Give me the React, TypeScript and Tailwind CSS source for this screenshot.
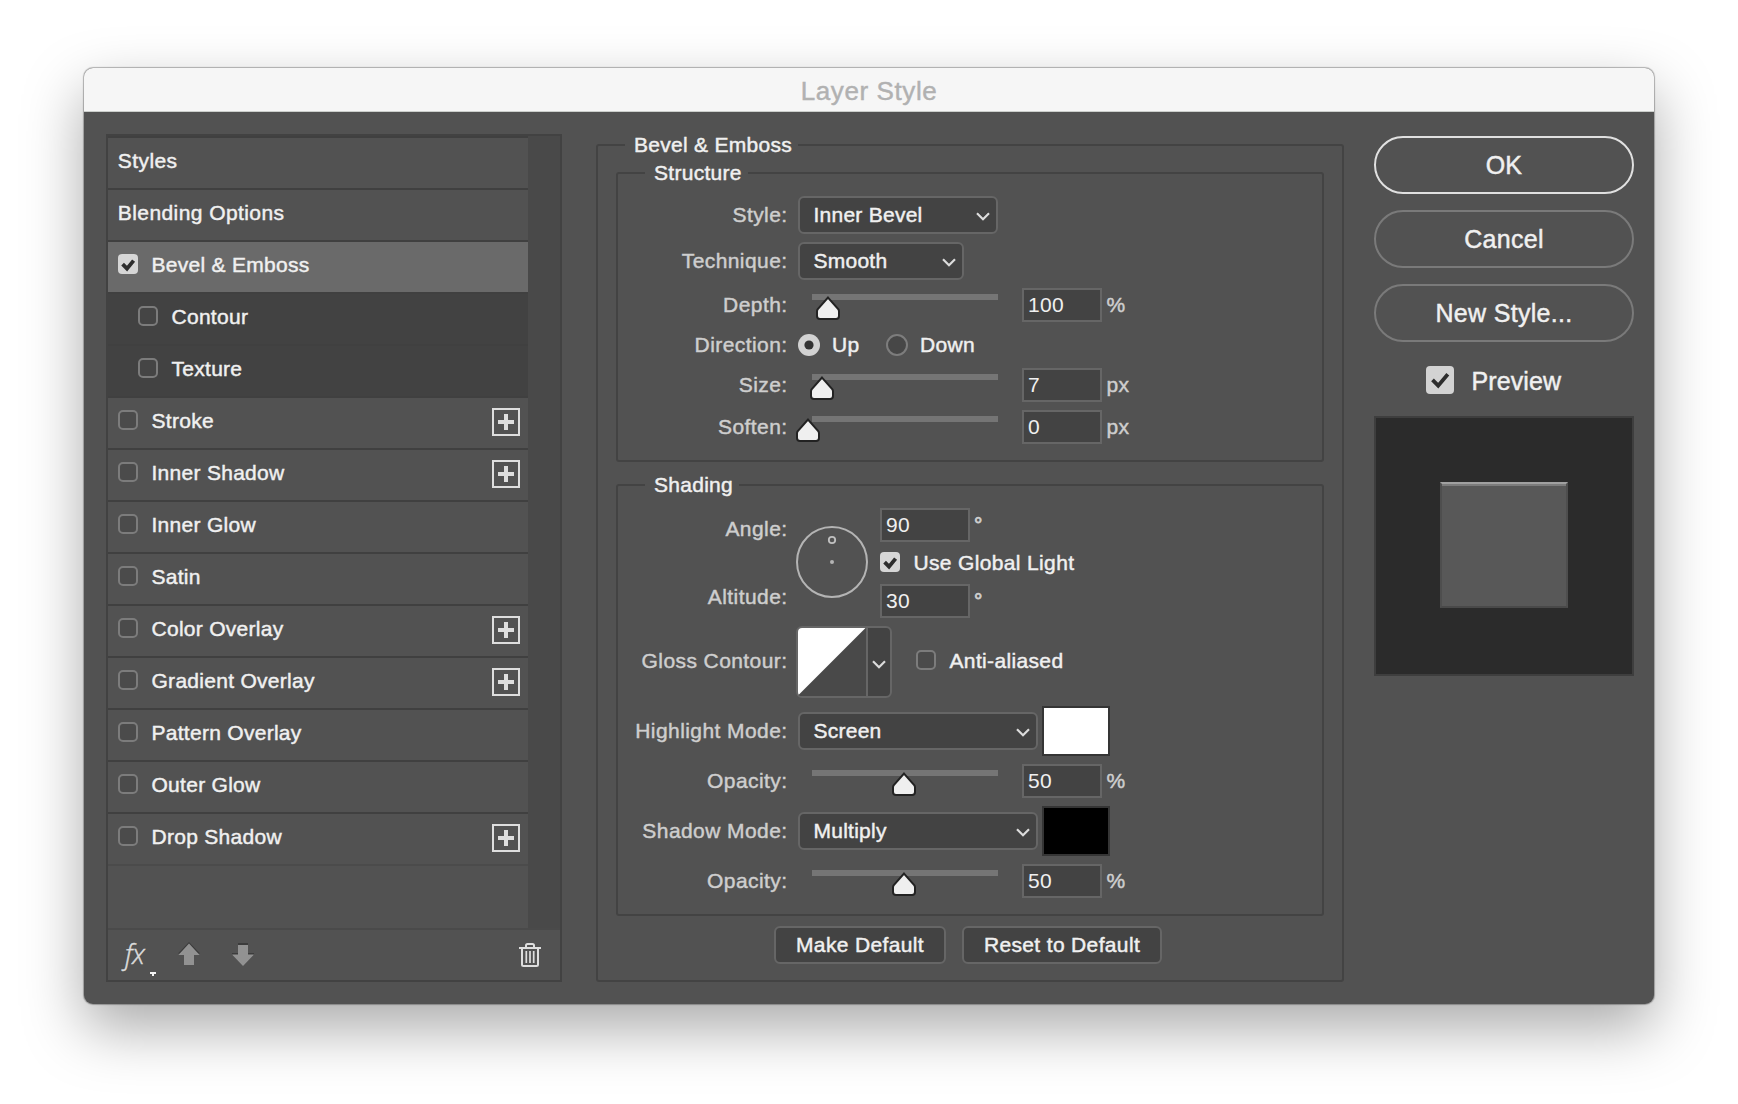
import React from "react";

type StyleItem = {
  name: string;
  check?: boolean;
  checked?: boolean;
  sub?: boolean;
  plus?: boolean;
};

const items: StyleItem[] = [
  { name: "Styles" },
  { name: "Blending Options" },
  { name: "Bevel & Emboss", check: true, checked: true },
  { name: "Contour", check: true, sub: true },
  { name: "Texture", check: true, sub: true },
  { name: "Stroke", check: true, plus: true },
  { name: "Inner Shadow", check: true, plus: true },
  { name: "Inner Glow", check: true },
  { name: "Satin", check: true },
  { name: "Color Overlay", check: true, plus: true },
  { name: "Gradient Overlay", check: true, plus: true },
  { name: "Pattern Overlay", check: true },
  { name: "Outer Glow", check: true },
  { name: "Drop Shadow", check: true, plus: true },
];

function Checkbox({ checked }: { checked?: boolean }) {
  if (!checked) {
    return <span className="block size-5 shrink-0 rounded-[5px] border-2 border-[#7c7c7c] bg-[#484848]/60" />;
  }
  return (
    <svg className="block size-5 shrink-0 rounded-[4px] bg-[#d6d6d6]" viewBox="0 0 20 20" fill="none">
      <path d="M4.6 10.2 9 14.7 15.6 6.6" stroke="#2e2e2e" strokeWidth="3.8" />
    </svg>
  );
}

function PlusBox() {
  return (
    <svg className="-mt-[2px] mr-2 ml-auto block size-7 shrink-0" viewBox="0 0 28 28">
      <rect x="1" y="1" width="26" height="26" fill="none" stroke="#dedede" strokeWidth="2" />
      <path d="M12 6h4v6h6v4h-6v6h-4v-6H6v-4h6z" fill="#dedede" />
    </svg>
  );
}

function Chevron() {
  return (
    <svg className="block h-[9px] w-[14px] shrink-0" viewBox="0 0 14 9" fill="none">
      <path d="M1 1.2 7 7.2 13 1.2" stroke="#dcdcdc" strokeWidth="2.2" />
    </svg>
  );
}

function Row({ label, className, children }: { label: string; className: string; children: React.ReactNode }) {
  return (
    <div className={`flex items-center ${className}`}>
      <span className="w-[170px] shrink-0 pr-[0.5px] text-right tracking-[0.42px] whitespace-nowrap text-[#cecece]">
        {label}
      </span>
      {children}
    </div>
  );
}

function Select({ value, width }: { value: string; width: string }) {
  return (
    <button
      className={`ml-[10px] flex h-[38px] items-center justify-between rounded-[6px] border-2 border-[#666] bg-[#434343] pr-[6px] pl-[13.5px] tracking-[0.25px] ${width}`}
    >
      <span>{value}</span>
      <span className="mt-[2px]">
        <Chevron />
      </span>
    </button>
  );
}

function Field({ value, width }: { value: string; width: string }) {
  return (
    <span
      className={`flex h-[34px] items-center border-2 border-[#666] bg-[#434343] pl-[4px] [-webkit-text-stroke:0px] ${width}`}
    >
      {value}
    </span>
  );
}

function Degree() {
  return <span className="ml-1 pt-[2px] leading-[30px] text-[#cecece] [-webkit-text-stroke:0.8px]">°</span>;
}

function Slider({ pos, value, unit }: { pos: number; value: string; unit: string }) {
  return (
    <>
      <span className="relative ml-6 block h-[34px] w-[186px] pt-[6px]">
        <span className="block h-[6px] bg-[#757575]" />
        <svg className="absolute top-2 size-6" style={{ left: pos - 12 }} viewBox="0 0 24 24">
          <path
            d="M12 1.6 22.2 13.2Q23 14.2 23 15.4V20Q23 23 20 23H4Q1 23 1 20V15.4Q1 14.2 1.8 13.2Z"
            fill="#efefef"
            stroke="#222"
            strokeWidth="2"
          />
        </svg>
      </span>
      <span className="ml-6">
        <Field value={value} width="w-20" />
      </span>
      <span className="ml-[4.5px] text-[#cecece]">{unit}</span>
    </>
  );
}

function Group({
  title,
  className,
  legend,
  children,
}: {
  title: string;
  className: string;
  legend: string;
  children: React.ReactNode;
}) {
  return (
    <fieldset className={`min-w-0 rounded-[3px] border-2 border-[#434343] ${className}`}>
      <legend className={`h-6 pr-[6px] leading-6 tracking-[0.28px] ${legend}`}>{title}</legend>
      {children}
    </fieldset>
  );
}

function StyleList() {
  return (
    <div className="mt-[22px] ml-[22px] flex h-[848px] w-[456px] shrink-0 flex-col border-2 border-[#424242]">
      <div className="flex h-[792px] bg-[#494949]">
        <div className="w-[420px] border-t-2 border-[#404040] bg-[#525252]">
          {items.map((it, i) => (
            <div
              key={it.name}
              className={`flex h-[52px] items-start border-b-2 pt-3 leading-5 ${
                it.checked ? "bg-[#6a6a6a]" : it.sub ? "bg-[#424242]" : ""
              } ${i === items.length - 1 ? "border-[#4b4b4b]" : "border-[#404040]"} ${it.sub ? "pl-[30px]" : "pl-[10px]"}`}
            >
              {it.check && <Checkbox checked={it.checked} />}
              <span className={`pt-px ${it.check ? "ml-[13.5px] tracking-[0.28px]" : "-ml-[0.2px] tracking-[0.42px]"}`}>
                {it.name}
              </span>
              {it.plus && <PlusBox />}
            </div>
          ))}
        </div>
      </div>
      <div className="flex flex-1 items-start border-t-2 border-[#4a4a4a]">
        <span className="mt-2 ml-[17px] w-[25px] font-['Open_Sans'] text-[27px] leading-8 font-light tracking-[-0.5px] text-[#dcdcdc] italic">
          fx
        </span>
        <svg className="mt-[42px] block h-1 w-[6px]" viewBox="0 0 6 4" fill="#f4f4f4">
          <path d="M0 0h6v2H4v2H2V2H0z" />
        </svg>
        <svg className="mt-3 ml-[22px] block h-6 w-[22px]" viewBox="0 0 22 24">
          <path d="M11 0 22 11.5H16V12H6v-.5H0Z" fill="#3c3c3c" />
          <path d="M11 1.4 21.6 13H16v10H6V13H.4Z" fill="#929292" />
        </svg>
        <svg className="mt-3 ml-8 block h-6 w-[22px]" viewBox="0 0 22 24">
          <path d="M6 1h10v3H6zM0 11h22v2H0z" fill="#3c3c3c" />
          <path d="M6 3h10v9.5h6L11 24 0 12.500h6Z" fill="#929292" />
        </svg>
        <svg className="mt-[13px] mr-[19px] ml-auto block h-6 w-[22px]" viewBox="0 0 22 24" fill="none" stroke="#dedede">
          <path d="M0 5H22M7 5V2.500Q7 1 8.500 1H13.500Q15 1 15 2.500V5" strokeWidth="2" />
          <path d="M3 5V21.500Q3 23 4.500 23H17.500Q19 23 19 21.500V5" strokeWidth="2" />
          <path d="M7.300 8V20M11 8V20M14.700 8V20" strokeWidth="1.700" />
        </svg>
      </div>
    </div>
  );
}

function Settings() {
  return (
    <Group
      title="Bevel & Emboss"
      legend="ml-[9px] pl-[9px]"
      className="mt-[21px] ml-[34px] h-[849px] w-[748px] shrink-0 pl-[18px]"
    >
      <Group title="Structure" legend="ml-[27px] pl-[9px]" className="mt-1 h-[301px] w-[708px]">
        <Row label="Style:" className="mt-[11px] h-[38px]">
          <Select value="Inner Bevel" width="w-[200px]" />
        </Row>
        <Row label="Technique:" className="mt-2 h-[38px]">
          <Select value="Smooth" width="w-[166px]" />
        </Row>
        <Row label="Depth:" className="mt-2 h-[34px]">
          <Slider pos={16} value="100" unit="%" />
        </Row>
        <Row label="Direction:" className="mt-[6px] h-[34px]">
          <svg className="ml-[10px] size-[22px]" viewBox="0 0 22 22">
            <circle cx="11" cy="11" r="11" fill="#d2d2d2" />
            <circle cx="11" cy="11" r="4.600" fill="#333" />
          </svg>
          <span className="ml-3 w-[54px]">Up</span>
          <svg className="size-[22px]" viewBox="0 0 22 22">
            <circle cx="11" cy="11" r="10" fill="#474747" stroke="#7d7d7d" strokeWidth="2" />
          </svg>
          <span className="ml-3">Down</span>
        </Row>
        <Row label="Size:" className="mt-[6px] h-[34px]">
          <Slider pos={10} value="7" unit="px" />
        </Row>
        <Row label="Soften:" className="mt-2 h-[34px]">
          <Slider pos={-4} value="0" unit="px" />
        </Row>
      </Group>

      <Group title="Shading" legend="ml-[27px] pl-[9px]" className="mt-[11px] h-[443px] w-[708px]">
        <div className="mt-[11px] flex h-[110px] items-start">
          <div className="flex w-[170px] flex-col gap-11 pt-[9px] pr-[0.5px] text-right leading-6 tracking-[0.42px] text-[#cecece]">
            <span>Angle:</span>
            <span>Altitude:</span>
          </div>
          <svg className="mt-[18px] ml-2 size-[72px]" viewBox="0 0 72 72" fill="none">
            <circle cx="36" cy="36" r="35" stroke="#b4b4b4" strokeWidth="2" />
            <circle cx="36" cy="14" r="3.200" stroke="#c0c0c0" strokeWidth="1.800" />
            <circle cx="36" cy="36" r="2" fill="#b4b4b4" />
          </svg>
          <div className="ml-3">
            <div className="flex h-[34px]">
              <Field value="90" width="w-[90px]" />
              <Degree />
            </div>
            <div className="mt-[10px] flex h-5 items-center">
              <Checkbox checked />
              <span className="ml-[13.5px] pt-px">Use Global Light</span>
            </div>
            <div className="mt-3 flex h-[34px]">
              <Field value="30" width="w-[90px]" />
              <Degree />
            </div>
          </div>
        </div>
        <Row label="Gloss Contour:" className="mt-2 h-[72px] pb-[2px]">
          <div className="ml-2 mt-[2px] flex h-[72px] w-24 rounded-[6px] border-2 border-[#666] bg-[#434343]">
            <svg className="block h-[68px] w-[68px] rounded-l-[4px] bg-[#494949]" viewBox="0 0 68 68">
              <path d="M0 0H67.500L0 67.500Z" fill="#fff" />
            </svg>
            <div className="flex flex-1 items-center justify-center border-l-2 border-[#666] pt-1">
              <Chevron />
            </div>
          </div>
          <span className="-mt-[2px] ml-6">
            <Checkbox />
          </span>
          <span className="ml-[13.5px]">Anti-aliased</span>
        </Row>
        <Row label="Highlight Mode:" className="mt-2 h-[50px]">
          <Select value="Screen" width="w-[240px]" />
          <span className="ml-1 h-[50px] w-[68px] border-2 border-[#353535] bg-white" />
        </Row>
        <Row label="Opacity:" className="mt-2 h-[34px]">
          <Slider pos={92} value="50" unit="%" />
        </Row>
        <Row label="Shadow Mode:" className="mt-2 h-[50px]">
          <Select value="Multiply" width="w-[240px]" />
          <span className="ml-1 h-[50px] w-[68px] border-2 border-[#353535] bg-black" />
        </Row>
        <Row label="Opacity:" className="mt-2 h-[34px]">
          <Slider pos={92} value="50" unit="%" />
        </Row>
      </Group>

      <div className="mt-[10px] ml-[158px] flex gap-4">
        <button className="h-[38px] w-[172px] rounded-[6px] border-2 border-[#666] bg-[#434343]">Make Default</button>
        <button className="h-[38px] w-[200px] rounded-[6px] border-2 border-[#666] bg-[#434343]">Reset to Default</button>
      </div>
    </Group>
  );
}

function Actions() {
  return (
    <div className="mt-6 ml-[30px] flex w-[260px] shrink-0 flex-col text-[25px] tracking-[0.3px]">
      <button className="h-[58px] rounded-[29px] border-2 border-[#e0e0e0] pt-[2px]">OK</button>
      <button className="mt-4 h-[58px] rounded-[29px] border-2 border-[#7a7a7a] pt-[2px]">Cancel</button>
      <button className="mt-4 h-[58px] rounded-[29px] border-2 border-[#7a7a7a] pt-[2px]">New Style...</button>
      <div className="mt-6 flex h-7 items-center pl-[52px]">
        <svg className="block size-7 rounded-[4px] bg-[#d3d3d3]" viewBox="0 0 28 28" fill="none">
          <path d="M6.500 13.800 12.200 19.600 21.800 8.200" stroke="#2e2e2e" strokeWidth="3.800" />
        </svg>
        <span className="ml-[17.5px] pt-[3px] tracking-[0.1px]">Preview</span>
      </div>
      <div className="mt-[22px] h-[260px] border-2 border-[#3e3e3e] bg-[#2b2b2b] pt-16 pl-16">
        <div className="h-[126px] w-32 border-x-2 border-t-2 border-b-2 border-x-[#4e4e4e] border-t-[#a0a0a0] border-b-[#494949] bg-[#585858]">
          <div className="h-[2px] bg-[#7c7c7c]" />
        </div>
      </div>
    </div>
  );
}

export default function App() {
  return (
    <div className="flex h-[1104px] w-[1738px] items-start overflow-hidden bg-white pt-[68px] pl-[84px] font-['Liberation_Sans',Arial,sans-serif] text-[21px] tracking-[0.35px] text-[#f0f0f0] [-webkit-text-stroke:0.45px]">
      <div className="h-[936px] w-[1570px] overflow-hidden rounded-[9px] bg-[#525252] shadow-[0_0_1px_1px_rgba(0,0,0,0.28),0_24px_60px_rgba(0,0,0,0.34)]">
        <div className="flex h-11 items-center justify-center border-b border-[#cbcecb] bg-[#f6f6f6] pt-1 text-[26px] tracking-[0.6px] text-[#b1b1b1]">
          Layer Style
        </div>
        <div className="flex">
          <StyleList />
          <Settings />
          <Actions />
        </div>
      </div>
    </div>
  );
}
